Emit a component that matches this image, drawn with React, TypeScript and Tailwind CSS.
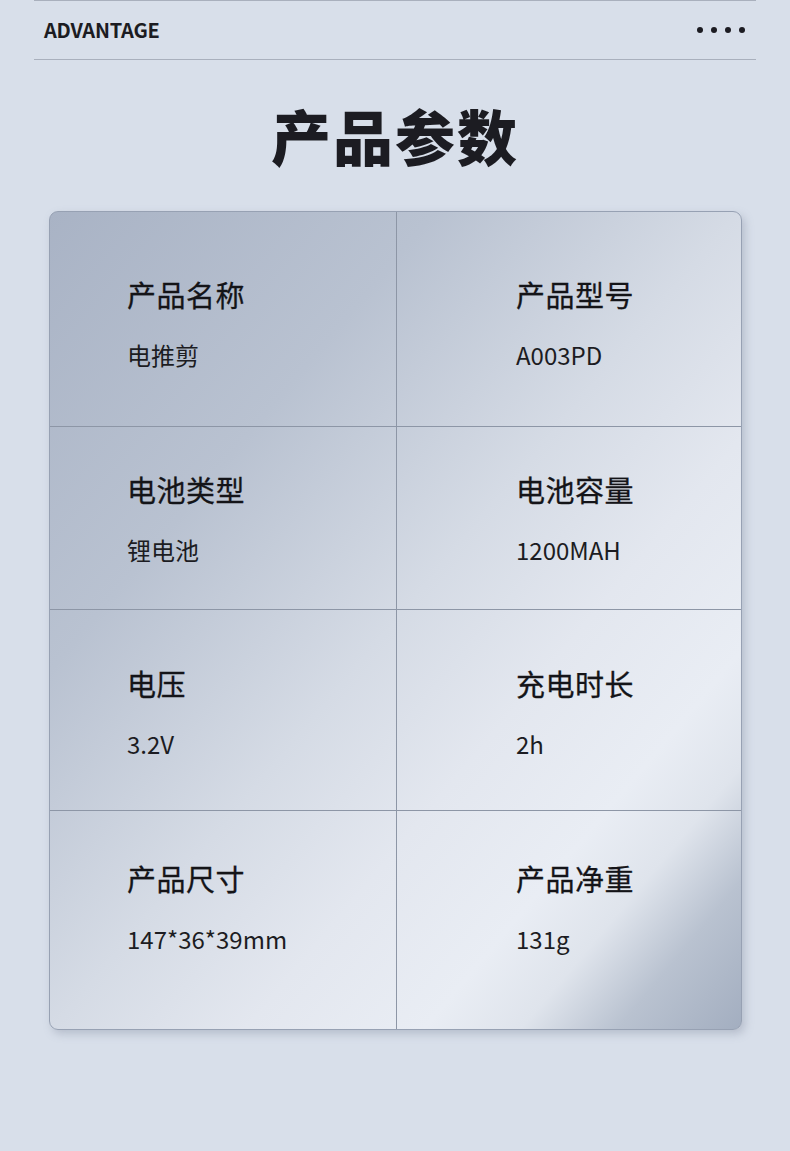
import React from "react";

const rows = [
  { h: "h-[215px]", pt: "pt-[63px]", l: ["产品名称", "电推剪"], r: ["产品型号", "A003PD"] },
  { h: "h-[183px]", pt: "pt-[43px]", l: ["电池类型", "锂电池"], r: ["电池容量", "1200MAH"] },
  { h: "h-[201px]", pt: "pt-[54px]", l: ["电压", "3.2V"], r: ["充电时长", "2h"] },
  { h: "h-[218px]", pt: "pt-[48px]", l: ["产品尺寸", "147*36*39mm"], r: ["产品净重", "131g"] },
];

function Cell({ label, value, pl, pt, right }: { label: string; value: string; pl: string; pt: string; right?: boolean }) {
  return (
    <div className={`${pl} ${pt} ${right ? "" : "border-r border-[#8d96a6]"} flex flex-col`}>
      <div className="text-[29px] leading-[38px] text-[#141418] font-normal tracking-[0.5px] [-webkit-text-stroke:0.3px_#141418]">{label}</div>
      <div className="mt-[27px] text-[24px] leading-[30px] text-[#1c1c22]">{value}</div>
    </div>
  );
}

export default function App() {
  return (
    <div
      className="w-[790px] h-[1151px] bg-[#d8dfea] overflow-hidden"
      style={{ fontFamily: '"Noto Sans CJK SC", "Noto Sans", sans-serif' }}
    >
      <div className="mx-[34px] border-t border-[#a9b0bd]">
        <div className="h-[59px] flex items-center justify-between px-[10px] border-b border-[#a9b0bd]">
          <div className="text-[20px] font-bold text-[#1c1c22] tracking-[-0.2px]">ADVANTAGE</div>
          <div className="flex gap-[8px] pr-[1px]">
            <span className="w-[6px] h-[6px] rounded-full bg-[#1c1c22]" />
            <span className="w-[6px] h-[6px] rounded-full bg-[#1c1c22]" />
            <span className="w-[6px] h-[6px] rounded-full bg-[#1c1c22]" />
            <span className="w-[6px] h-[6px] rounded-full bg-[#1c1c22]" />
          </div>
        </div>
      </div>
      <h1 className="mt-[35px] text-center text-[60px] leading-[80px] font-black text-[#1c1c22] tracking-[2px]">产品参数</h1>
      <div
        className="ml-[49px] w-[693px] mt-[36px] rounded-[9px] border border-[#97a1b3] overflow-hidden shadow-[3px_4px_8px_rgba(120,130,150,0.35)]"
        style={{
          background:
            "linear-gradient(130deg, #a9b3c5 0%, #b9c2d1 28%, #d5dbe5 50%, #e3e7ef 64%, #e9edf4 77%, #dfe4ec 84%, #b9c2d0 91%, #a3aec0 100%)",
        }}
      >
        {rows.map((row, i) => (
          <div
            key={i}
            className={`grid grid-cols-[347px_1fr] ${row.h} ${i < rows.length - 1 ? "border-b border-[#8d96a6]" : ""}`}
          >
            <Cell label={row.l[0]} value={row.l[1]} pl="pl-[77px]" pt={row.pt} />
            <Cell label={row.r[0]} value={row.r[1]} pl="pl-[119px]" pt={row.pt} right />
          </div>
        ))}
      </div>
    </div>
  );
}
